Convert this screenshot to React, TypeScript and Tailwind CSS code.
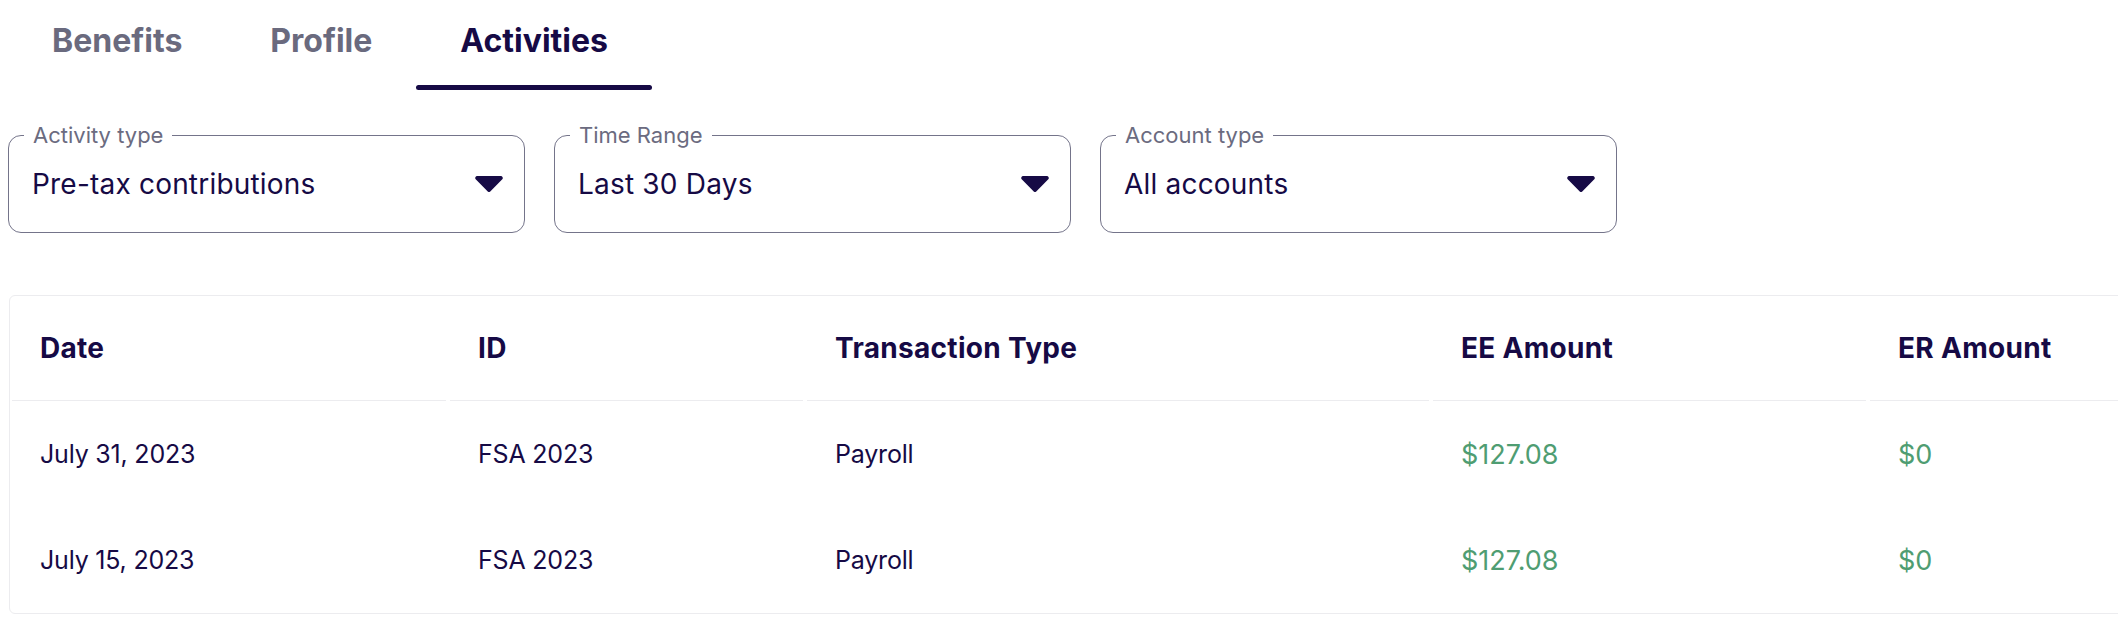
import React from "react";

const navy = "text-[#160a45]";

function Caret() {
  return (
    <svg width="28" height="16" viewBox="0 0 28 16" className="shrink-0">
      <path
        d="M2.2 0 H25.8 A2 2 0 0 1 27.3 3.3 L15.5 15.3 A2.1 2.1 0 0 1 12.5 15.3 L0.7 3.3 A2 2 0 0 1 2.2 0 Z"
        fill="#160a45"
      />
    </svg>
  );
}

function SelectBox({ label, value }: { label: string; value: string }) {
  return (
    <div className="relative w-[517px] h-[98px] rounded-[13px] border border-[#74748a] flex items-center justify-between pl-[23px] pr-[21px]">
      <span className="absolute left-[15px] top-0 -translate-y-[55%] bg-white px-[9px] text-[22px] leading-none text-[#6b6b80]">
        {label}
      </span>
      <span className={`text-[28px] leading-none tracking-[0.2px] ${navy}`}>{value}</span>
      <Caret />
    </div>
  );
}

const cols = [438, 357, 626, 437, 437];
const headers = ["Date", "ID", "Transaction Type", "EE Amount", "ER Amount"];
const rows = [
  ["July 31, 2023", "FSA 2023", "Payroll", "$127.08", "$0"],
  ["July 15, 2023", "FSA 2023", "Payroll", "$127.08", "$0"],
];

export default function App() {
  const tabs = ["Benefits", "Profile", "Activities"];
  return (
    <div
      className="w-[2118px] h-[624px] overflow-hidden bg-white"
      style={{ fontFamily: "Inter, 'Noto Sans', sans-serif" }}
    >
      <div className="pl-[8px]">
        {/* Tabs */}
        <div className="flex h-[90px]">
          {tabs.map((t) => {
            const active = t === "Activities";
            return (
              <div key={t} className="flex flex-col items-center px-[44px] pt-[21px]">
                <span
                  className={`text-[32px] leading-[40px] font-bold ${
                    active ? "text-[#160a45]" : "text-[#6a6a7e]"
                  }`}
                >
                  {t}
                </span>
                <div
                  className={`mt-[24px] h-[5px] -mx-[44px] self-stretch rounded-full ${
                    active ? "bg-[#160a45]" : "bg-transparent"
                  }`}
                />
              </div>
            );
          })}
        </div>

        {/* Filters */}
        <div className="flex gap-[29px] mt-[45px]">
          <SelectBox label="Activity type" value="Pre-tax contributions" />
          <SelectBox label="Time Range" value="Last 30 Days" />
          <SelectBox label="Account type" value="All accounts" />
        </div>

        {/* Table */}
        <div className="ml-[1px] mt-[62px] w-[2400px] rounded-[6px] border border-[#ececef]">
          <div className="flex h-[105px]">
            {headers.map((h, i) => (
              <div key={h} style={{ width: cols[i] }} className="shrink-0 h-full">
                <div className="mx-[2px] h-full border-b border-[#ececef] flex items-center pl-[28px]">
                  <span className={`text-[28px] leading-none font-bold tracking-[0.3px] ${navy}`}>{h}</span>
                </div>
              </div>
            ))}
          </div>
          {rows.map((r, ri) => (
            <div key={ri} className="flex h-[106px]">
              {r.map((c, i) => (
                <div key={i} style={{ width: cols[i] }} className="shrink-0 h-full">
                  <div className="mx-[2px] h-full flex items-center pl-[28px]">
                    <span
                      className={
                        i >= 3
                          ? "text-[27px] leading-none text-[#4f9d72]"
                          : `text-[25px] leading-none tracking-[-0.2px] ${navy}`
                      }
                    >
                      {c}
                    </span>
                  </div>
                </div>
              ))}
            </div>
          ))}
        </div>
      </div>
    </div>
  );
}
